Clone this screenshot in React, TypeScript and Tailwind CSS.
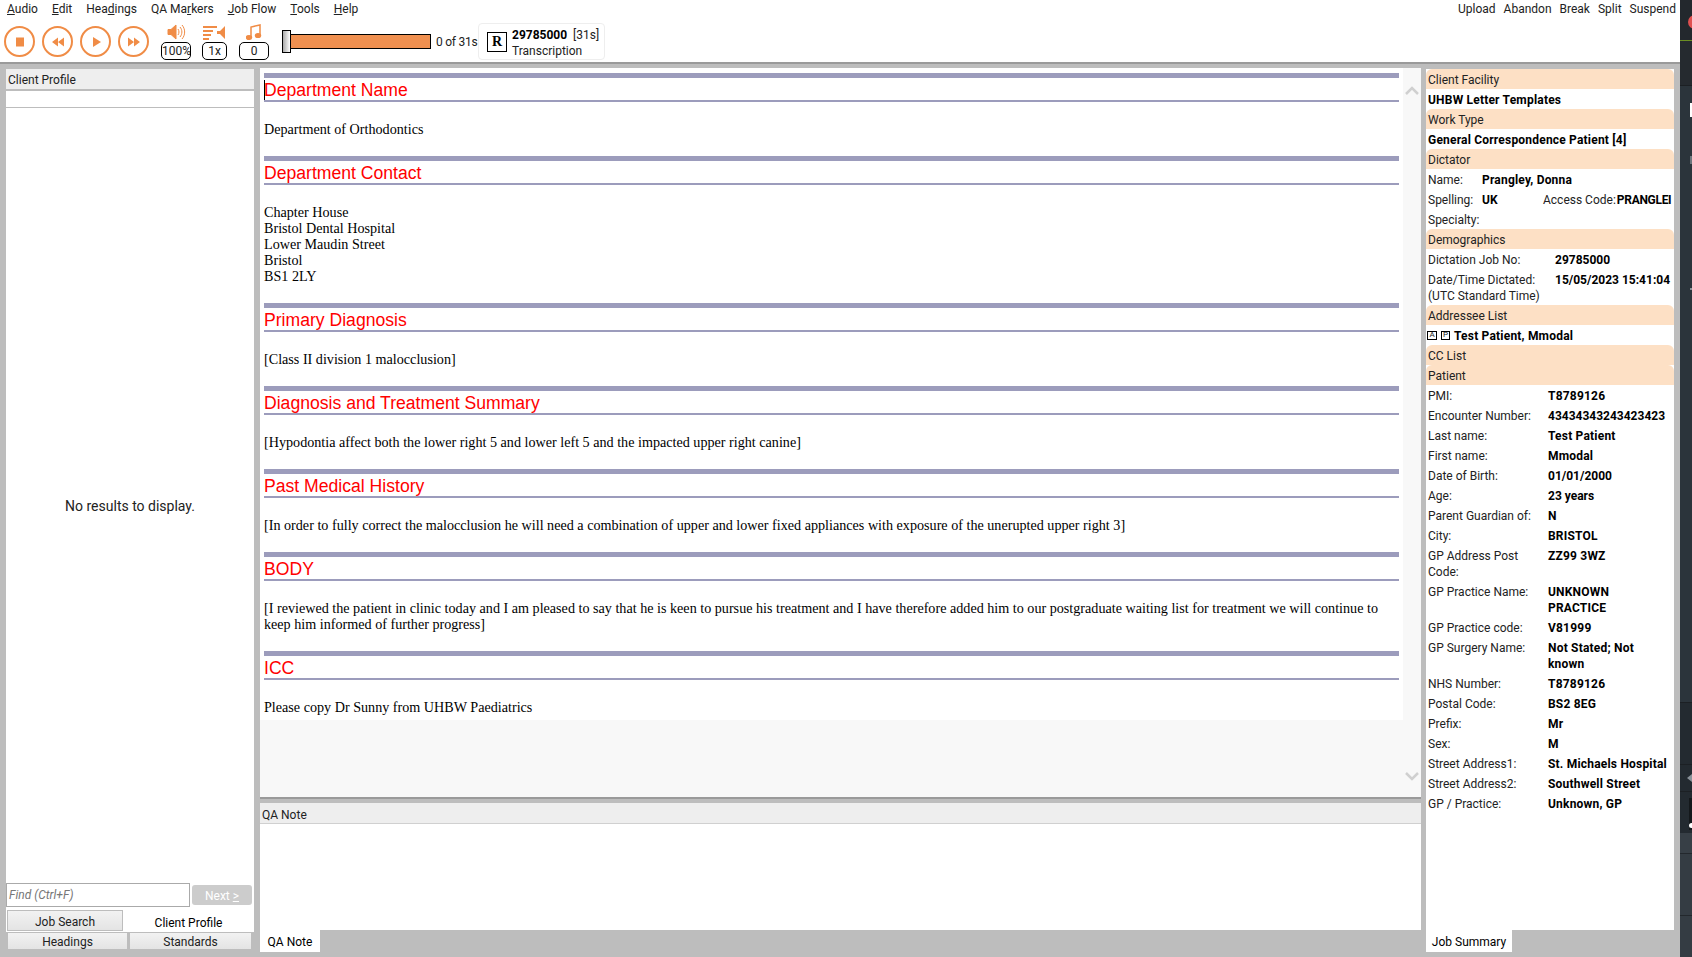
import React from 'react';

const ui = "font-['Roboto',sans-serif] text-[12px] leading-[20px]";

const menus: [string, string, string][] = [
  ['', 'A', 'udio'],
  ['', 'E', 'dit'],
  ['Hea', 'd', 'ings'],
  ['QA Ma', 'r', 'kers'],
  ['', 'J', 'ob Flow'],
  ['', 'T', 'ools'],
  ['', 'H', 'elp'],
];

const RoundButton: React.FC<{ children: React.ReactNode }> = ({ children }) => (
  <div className="flex h-[31px] w-[31px] items-center justify-center rounded-full border-[2.5px] border-[#f08c46] bg-white">
    <svg width="16" height="16" viewBox="0 0 16 16" fill="#f08c46">{children}</svg>
  </div>
);

const Counter: React.FC<{ icon: React.ReactNode; label: string; width: string }> = ({ icon, label, width }) => (
  <div className="flex flex-col items-center">
    <div className="flex h-[18px] items-start">{icon}</div>
    <div className={`${width} h-[18px] overflow-hidden rounded-[5px] border border-black text-center leading-[16px]`}>{label}</div>
  </div>
);

const Heading: React.FC<{ title: string; caret?: boolean }> = ({ title, caret }) => (
  <div className="relative">
    <div className="h-[5px] bg-[#9c9cbc]" />
    <div className="h-[22px] font-['Liberation_Sans',sans-serif] text-[17.6px] leading-[24px] whitespace-nowrap text-[#ff0000]">{title}</div>
    <div className="h-[2px] bg-[#9c9cbc]" />
    {caret && <div className="absolute top-[7px] left-0 h-[20px] w-px bg-black" />}
  </div>
);

const Section: React.FC<{ title: string; lines: string[]; caret?: boolean }> = ({ title, lines, caret }) => (
  <section className="mb-[19px]">
    <Heading title={title} caret={caret} />
    <div className="mt-[19px] font-['Liberation_Serif',serif] text-[14.15px] leading-[16px] whitespace-nowrap text-black">
      {lines.map((l) => (
        <div key={l}>{l}</div>
      ))}
    </div>
  </section>
);

const Band: React.FC<{ children: React.ReactNode }> = ({ children }) => (
  <div className="h-[20px] rounded-t-[6px] bg-[#fde0c5] pl-[2px] leading-[22px]">{children}</div>
);

const Row: React.FC<{ label: React.ReactNode; value: string; labelWidth?: string }> = ({ label, value, labelWidth = 'w-[120px]' }) => (
  <div className="flex pl-[2px]">
    <div className={`${labelWidth} shrink-0 pt-[3px] pb-[1px] leading-[16px]`}>{label}</div>
    <div className={`pt-[3px] pb-[1px] leading-[16px] font-bold whitespace-pre-line text-black ${/^\d/.test(value) ? 'tracking-normal' : 'tracking-[0.2px]'}`}>{value}</div>
  </div>
);

const patient: [React.ReactNode, string][] = [
  ['PMI:', 'T8789126'],
  ['Encounter Number:', '43434343243423423'],
  ['Last name:', 'Test Patient'],
  ['First name:', 'Mmodal'],
  ['Date of Birth:', '01/01/2000'],
  ['Age:', '23 years'],
  ['Parent Guardian of:', 'N'],
  ['City:', 'BRISTOL'],
  ['GP Address Post Code:', 'ZZ99 3WZ'],
  ['GP Practice Name:', 'UNKNOWN\nPRACTICE'],
  ['GP Practice code:', 'V81999'],
  ['GP Surgery Name:', 'Not Stated; Not\nknown'],
  ['NHS Number:', 'T8789126'],
  ['Postal Code:', 'BS2 8EG'],
  ['Prefix:', 'Mr'],
  ['Sex:', 'M'],
  ['Street Address1:', 'St. Michaels Hospital'],
  ['Street Address2:', 'Southwell Street'],
  ['GP / Practice:', 'Unknown, GP'],
];

const tabClass = 'flex items-center justify-center border border-[#bdbdbd] bg-gradient-to-b from-[#f2f2f2] to-[#e4e4e4] pt-[2px]';

// window behind the app, only a sliver of it shows on the right
const BackWindow: React.FC = () => (
  <div className="flex w-[12px] shrink-0 flex-col overflow-hidden">
    <div className="relative h-[41px] shrink-0 border-b border-[#6b8e23] bg-[#23282d]">
      <div className="absolute top-[15px] left-[8px] h-[14px] w-[14px] rounded-full bg-[#e05050]" />
    </div>
    <div className="h-[45px] shrink-0 border-b border-[#1c2024] bg-[#252a2f]" />
    <div className="relative h-[617px] shrink-0 border-b border-[#1c2024] bg-[#2b343b]">
      <div className="absolute top-[17px] left-[10px] h-[14px] w-[2px] bg-white" />
      <div className="absolute top-[70px] left-[10px] h-[8px] w-[2px] bg-[#6b747b]" />
      <div className="absolute top-[202px] left-[10px] h-[2px] w-[2px] bg-[#8a9299]" />
    </div>
    <div className="h-[62px] shrink-0 border-b border-[#1c2024] bg-[#232a30]" />
    <div className="flex h-[27px] shrink-0 items-center border-b border-[#1c2024] bg-[#232a30] pl-[7px]">
      <svg width="5" height="8" viewBox="0 0 5 8" fill="#8a9299"><path d="M5 0v8L0 4z" /></svg>
    </div>
    <div className="relative h-[41px] shrink-0 bg-[#232a30]">
      <div className="absolute top-[6px] left-[9px] h-[32px] w-[3px] bg-[#14181b]" />
      <div className="absolute top-[31px] left-[9px] h-[5px] w-[3px] rounded-l-full bg-white" />
    </div>
    <div className="h-[21px] shrink-0 border-b border-[#23282d] bg-[#373f46]" />
    <div className="h-[62px] shrink-0 border-b border-[#23282d] bg-[#343c43]" />
    <div className="flex-1 bg-[#343c43]" />
  </div>
);

const App: React.FC = () => (
  <div className={`flex h-[957px] w-[1692px] overflow-hidden bg-[#2b3238] ${ui} text-[#222]`}>
    <div className="flex w-[1680px] flex-col">
      {/* Top bar */}
      <header className="h-[64px] shrink-0 border-b-2 border-[#9a9a9a] bg-white">
        <div className="flex h-[18px] justify-between pr-[4px] pl-[7px] leading-[18px]">
          <div className="flex gap-[14px]">
            {menus.map(([a, b, c]) => (
              <span key={a + b + c}>
                {a}
                <span className="underline">{b}</span>
                {c}
              </span>
            ))}
          </div>
          <div className="flex gap-[8px]">
            <span>Upload</span>
            <span>Abandon</span>
            <span>Break</span>
            <span>Split</span>
            <span>Suspend</span>
          </div>
        </div>
        <div className="mt-[5px] flex h-[37px] items-center pl-[4px]">
          <div className="flex gap-[7px]">
            <RoundButton><rect x="4" y="3.500" width="8" height="9" /></RoundButton>
            <RoundButton><path d="M8 3.500v9L2 8zM14 3.500v9L8 8z" /></RoundButton>
            <RoundButton><path d="M5 3l8 5-8 5z" /></RoundButton>
            <RoundButton><path d="M2 3.500l6 4.500-6 4.500zM8 3.500l6 4.500-6 4.500z" /></RoundButton>
          </div>
          <div className="ml-[12px] flex gap-[11px]">
            <Counter
              width="w-[30px]"
              label="100%"
              icon={
                <svg width="19" height="16" viewBox="0 0 19 16" fill="none" stroke="#f08c46">
                  <path d="M1 5.500h3l5-4.500v14l-5-4.500H1z" fill="#f08c46" />
                  <path d="M11 5c1.300 2 1.300 4 0 6M13 3c2.500 3 2.500 7 0 10M15 1c3.500 4 3.500 10 0 14" />
                </svg>
              }
            />
            <Counter
              width="w-[25px]"
              label="1x"
              icon={
                <svg width="23" height="16" viewBox="0 0 23 16" fill="#f08c46">
                  <path d="M0 2h14v2H0zM0 6h10v2H0zM0 10h8v2H0zM0 14h6v2H0zM14 7h3l5-5v13l-5-5h-3z" />
                </svg>
              }
            />
            <div className="ml-[1px]">
              <Counter
                width="w-[30px]"
                label="0"
                icon={
                  <svg width="16" height="16" viewBox="0 0 16 16" fill="none" stroke="#f08c46" strokeWidth="1.500">
                    <path d="M5 13V3l9-2v10" />
                    <ellipse cx="3" cy="13.500" rx="2.500" ry="1.800" fill="#f08c46" />
                    <ellipse cx="12" cy="11.500" rx="2.500" ry="1.800" fill="#f08c46" />
                  </svg>
                }
              />
            </div>
          </div>
          <div className="relative ml-[21px] h-[15px] w-[141px] border border-black bg-[#f09050]">
            <div className="absolute top-[-5px] left-[-9px] h-[23px] w-[9px] border border-black bg-gradient-to-r from-[#aaa] to-white" />
          </div>
          <span className="ml-[5px] w-[41px] tracking-[-0.25px] whitespace-nowrap">0 of 31s</span>
          <div className="ml-[1px] flex h-[37px] w-[127px] items-center rounded-[4px] border border-[#eeeeee] pl-[8px]">
            <div className="flex h-[20px] w-[20px] items-center justify-center border border-black font-['Liberation_Serif',serif] text-[14px] font-bold text-black">R</div>
            <div className="ml-[5px] pt-[2px] leading-[16px] whitespace-nowrap">
              <div><span className="font-bold text-black">29785000</span>&nbsp; [31s]</div>
              <div>Transcription</div>
            </div>
          </div>
        </div>
      </header>

      {/* Panels */}
      <main className="flex min-h-0 flex-1 gap-[5px] bg-[#bdbdbd] pt-[4px] pr-[6px] pb-[5px] pl-[6px]">
        {/* Left */}
        <aside className="mt-[1px] mr-[1px] mb-[2px] flex w-[248px] shrink-0 flex-col">
          <div className="flex h-[20px] shrink-0 items-center bg-[#eeeeee] pt-[2px] pl-[2px]">Client Profile</div>
          <div className="mt-[2px] h-[16px] shrink-0 bg-white" />
          <div className="mt-[1px] flex flex-1 flex-col bg-white">
            <div className="flex flex-1 items-center justify-center pt-[20px] text-[14px] text-[#222]">No results to display.</div>
            <div className="flex h-[24px] items-center gap-[2px]">
              <div className="flex h-[24px] w-[184px] items-center border border-[#aaa] pl-[2px] text-[#777] italic">Find (Ctrl+F)</div>
              <div className="flex h-[20px] w-[60px] items-center justify-center rounded-[3px] bg-[#cccccc] pt-[1px] text-white">
                Next&nbsp;<span className="underline">&gt;</span>
              </div>
            </div>
            <div className="mt-[3px] flex h-[22px]">
              <div className={`ml-[1px] h-[21px] w-[116px] ${tabClass}`}>Job Search</div>
              <div className="flex flex-1 items-center justify-center pt-[4px] text-black">Client Profile</div>
            </div>
          </div>
          <div className="flex h-[18px] shrink-0 gap-px pl-[1px]">
            <div className={`w-[121px] ${tabClass}`}>Headings</div>
            <div className={`w-[123px] ${tabClass}`}>Standards</div>
          </div>
        </aside>

        {/* Centre */}
        <div className="flex min-w-0 flex-1 flex-col">
          <div className="relative h-[731px] shrink-0 border-b-2 border-[#9a9a9a] bg-[#f8f8f8]">
            <div className="h-[652px] w-[1143px] overflow-hidden bg-white pt-[5px] pr-[4px] pl-[4px]">
              <Section caret title="Department Name" lines={['Department of Orthodontics']} />
              <Section title="Department Contact" lines={['Chapter House', 'Bristol Dental Hospital', 'Lower Maudin Street', 'Bristol', 'BS1 2LY']} />
              <Section title="Primary Diagnosis" lines={['[Class II division 1 malocclusion]']} />
              <Section title="Diagnosis and Treatment Summary" lines={['[Hypodontia affect both the lower right 5 and lower left 5 and the impacted upper right canine]']} />
              <Section title="Past Medical History" lines={['[In order to fully correct the malocclusion he will need a combination of upper and lower fixed appliances with exposure of the unerupted upper right 3]']} />
              <Section title="BODY" lines={['[I reviewed the patient in clinic today and I am pleased to say that he is keen to pursue his treatment and I have therefore added him to our postgraduate waiting list for treatment we will continue to', 'keep him informed of further progress]']} />
              <Section title="ICC" lines={['Please copy Dr Sunny from UHBW Paediatrics']} />
            </div>
            <svg className="absolute top-[18px] right-[2px]" width="14" height="10" viewBox="0 0 14 10" fill="none" stroke="#d0d0d0" strokeWidth="2.500"><path d="M1 8l6-6 6 6" /></svg>
            <svg className="absolute right-[2px] bottom-[16px]" width="14" height="10" viewBox="0 0 14 10" fill="none" stroke="#d0d0d0" strokeWidth="2.500"><path d="M1 2l6 6 6-6" /></svg>
          </div>
          <div className="mt-[4px] flex h-[21px] shrink-0 items-center border-b border-[#d0d0d0] bg-[#eeeeee] pt-[3px] pl-[2px]">QA Note</div>
          <div className="flex-1 bg-white" />
          <div className="flex h-[22px] shrink-0">
            <div className="flex w-[60px] items-center justify-center bg-white pt-[2px] text-black">QA Note</div>
          </div>
        </div>

        {/* Right */}
        <aside className="mt-[1px] flex w-[248px] shrink-0 flex-col">
          <div className="flex-1 overflow-hidden bg-white leading-[20px]">
            <Band>Client Facility</Band>
            <div className="h-[20px] pl-[2px] leading-[22px] font-bold tracking-[0.2px] text-black">UHBW Letter Templates</div>
            <Band>Work Type</Band>
            <div className="h-[20px] pl-[2px] leading-[22px] font-bold tracking-[0.2px] text-black">General Correspondence Patient [4]</div>
            <Band>Dictator</Band>
            <Row labelWidth="w-[54px]" label="Name:" value="Prangley, Donna" />
            <div className="flex pl-[2px] whitespace-nowrap">
              <div className="w-[54px] shrink-0 pt-[3px] pb-[1px] leading-[16px]">Spelling:</div>
              <div className="w-[61px] shrink-0 pt-[3px] pb-[1px] leading-[16px] font-bold text-black">UK</div>
              <div className="pt-[3px] pb-[1px] leading-[16px]">Access Code:</div>
              <div className="ml-[1px] pt-[3px] pb-[1px] leading-[16px] font-bold tracking-[-0.3px] text-black">PRANGLEI</div>
            </div>
            <div className="h-[20px] pl-[2px] leading-[22px]">Specialty:</div>
            <Band>Demographics</Band>
            <Row labelWidth="w-[127px]" label="Dictation Job No:" value="29785000" />
            <Row labelWidth="w-[127px]" label={<span className="whitespace-nowrap">Date/Time Dictated:<br />(UTC Standard Time)</span>} value="15/05/2023 15:41:04" />
            <Band>Addressee List</Band>
            <div className="flex h-[20px] items-center pl-[1px]">
              <span className="flex h-[9px] w-[10px] items-center justify-center border border-black text-[8px] leading-none">A</span>
              <span className="ml-[4px] flex h-[9px] w-[9px] items-center justify-center border border-black text-[8px] leading-none">P</span>
              <span className="ml-[4px] pt-[2px] font-bold tracking-[0.2px] text-black">Test Patient, Mmodal</span>
            </div>
            <Band>CC List</Band>
            <Band>Patient</Band>
            {patient.map(([l, v]) => (
              <Row key={v + String(l)} labelWidth="w-[120px]" label={l} value={v} />
            ))}
          </div>
          <div className="flex h-[22px] shrink-0">
            <div className="flex w-[86px] items-center justify-center bg-white pt-[2px] text-black">Job Summary</div>
          </div>
        </aside>
      </main>
    </div>
    <BackWindow />
  </div>
);

export default App;
